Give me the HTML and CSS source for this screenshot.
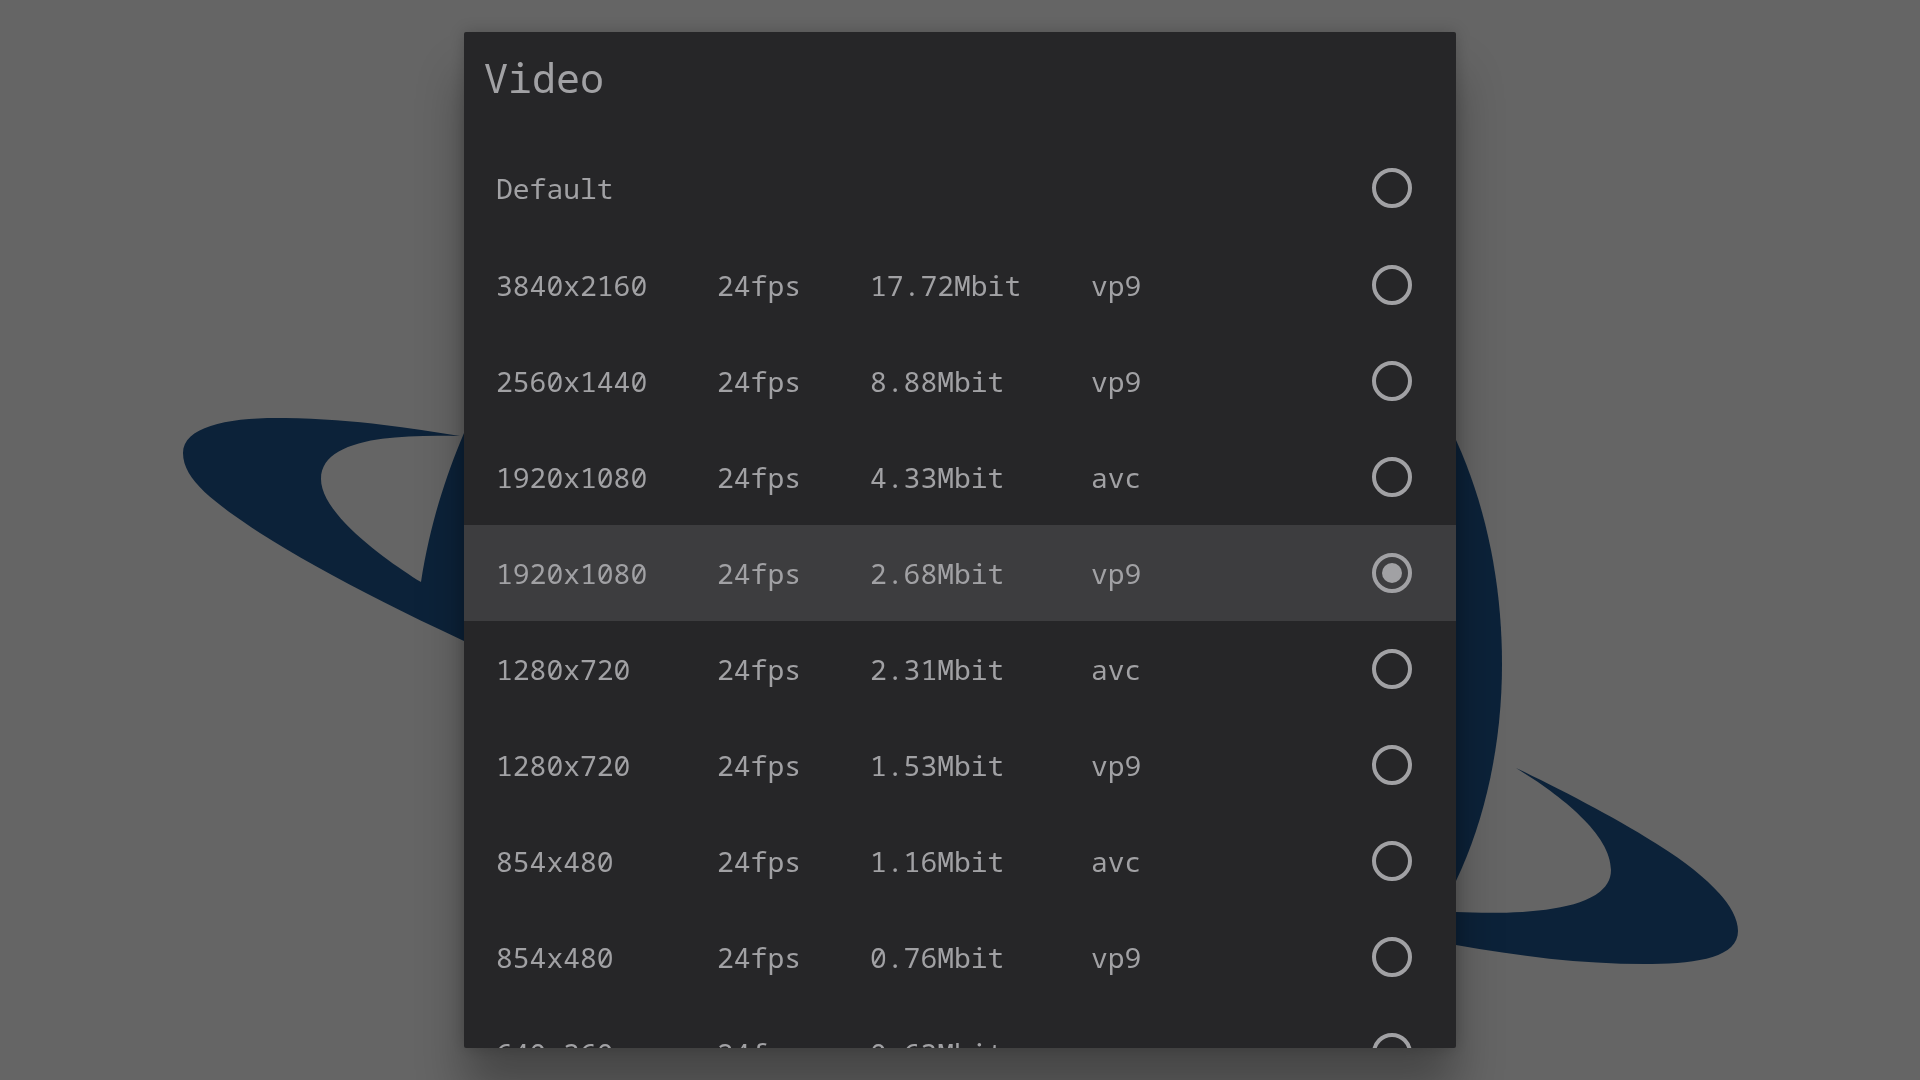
FILE: index.html
```html
<!DOCTYPE html>
<html lang="en">
<head>
    <meta charset="UTF-8">
    <meta name="viewport" content="width=device-width, initial-scale=1.0">
    <title>Video</title>
    <link rel="stylesheet" href="styles.css">
</head>
<body>
    <svg class="backdrop" viewBox="0 0 1920 1080" preserveAspectRatio="xMidYMid slice" aria-hidden="true">
        <!-- left ring and globe edge -->
        <path d="M460 436C405 427 350 419 285 418C230 417 183 426 183 453C183 480 215 503 260 533C310 565 380 602 464 641H720V433H464C445 478 430 525 421 582C390 563 321 515 321 479C321 440 390 434 460 436Z"/>
        <!-- globe -->
        <path d="M1456 440C1487 508 1502 586 1502 664C1502 742 1486 818 1456 881H1200V440Z"/>
        <!-- right ring -->
        <path d="M1516 768C1560 789 1620 820 1660 846C1703 873 1738 905 1738 931C1738 958 1695 964 1645 964C1580 964 1518 956 1456 945H1300V912H1456C1520 915 1611 912 1611 870C1611 835 1562 796 1516 768Z"/>
    </svg>

    <main class="page">
        <form class="dialog">
            <h1 class="dialog-title">Video</h1>

            <div class="options">
                <label class="option option-default">
                    <span class="name">Default</span>
                    <input type="radio" name="format" class="radio">
                </label>
                <label class="option">
                    <span>3840x2160</span>
                    <span>24fps</span>
                    <span>17.72Mbit</span>
                    <span>vp9</span>
                    <input type="radio" name="format" class="radio">
                </label>
                <label class="option">
                    <span>2560x1440</span>
                    <span>24fps</span>
                    <span>8.88Mbit</span>
                    <span>vp9</span>
                    <input type="radio" name="format" class="radio">
                </label>
                <label class="option">
                    <span>1920x1080</span>
                    <span>24fps</span>
                    <span>4.33Mbit</span>
                    <span>avc</span>
                    <input type="radio" name="format" class="radio">
                </label>
                <label class="option">
                    <span>1920x1080</span>
                    <span>24fps</span>
                    <span>2.68Mbit</span>
                    <span>vp9</span>
                    <input type="radio" name="format" class="radio" checked>
                </label>
                <label class="option">
                    <span>1280x720</span>
                    <span>24fps</span>
                    <span>2.31Mbit</span>
                    <span>avc</span>
                    <input type="radio" name="format" class="radio">
                </label>
                <label class="option">
                    <span>1280x720</span>
                    <span>24fps</span>
                    <span>1.53Mbit</span>
                    <span>vp9</span>
                    <input type="radio" name="format" class="radio">
                </label>
                <label class="option">
                    <span>854x480</span>
                    <span>24fps</span>
                    <span>1.16Mbit</span>
                    <span>avc</span>
                    <input type="radio" name="format" class="radio">
                </label>
                <label class="option">
                    <span>854x480</span>
                    <span>24fps</span>
                    <span>0.76Mbit</span>
                    <span>vp9</span>
                    <input type="radio" name="format" class="radio">
                </label>
                <label class="option">
                    <span>640x360</span>
                    <span>24fps</span>
                    <span>0.63Mbit</span>
                    <span>avc</span>
                    <input type="radio" name="format" class="radio">
                </label>
            </div>
        </form>
    </main>
</body>
</html>
```
FILE: styles.css
```css
* {
    box-sizing: border-box;
}
body {
    margin: 0;
    background-color: #656565;
    color: #a1a1a4;
    font-family: "Droid Sans Mono", "Noto Sans Mono", "DejaVu Sans Mono", monospace;
    font-size: 28px;
    overflow: hidden;
}
.backdrop {
    position: fixed;
    inset: 0;
    width: 100%;
    height: 100%;
    fill: #0c2239;
}
.page {
    position: relative;
    display: flex;
    justify-content: center;
    height: 100vh;
    padding: 32px;
}
.dialog {
    display: flex;
    flex-direction: column;
    width: 100%;
    max-width: 992px;
    background-color: #262628;
    border-radius: 2px;
    box-shadow: 0 44px 48px rgba(0, 0, 0, 0.3), 0 0 16px rgba(0, 0, 0, 0.2);
    overflow: hidden;
}
.dialog-title {
    margin: 0;
    padding: 22px 20px 38px;
    font-size: 40px;
    font-weight: 400;
    line-height: 48px;
}
.options {
    flex: 1;
    min-height: 0;
    overflow-y: auto;
    scrollbar-width: none;
}
.option {
    display: grid;
    grid-template-columns: 221px 153px 221px 1fr auto;
    align-items: center;
    height: 96px;
    padding: 0 44px 0 32px;
    cursor: pointer;
}
.option-default {
    margin-bottom: 1px;
}
.option:has(.radio:checked) {
    background-color: #3d3d3f;
}
.name {
    grid-column: 1 / 5;
}
.radio {
    appearance: none;
    display: grid;
    place-content: center;
    width: 40px;
    height: 40px;
    margin: 0;
    border: 4px solid #a1a1a4;
    border-radius: 50%;
    cursor: pointer;
}
.radio:checked::before {
    content: "";
    width: 20px;
    height: 20px;
    border-radius: 50%;
    background-color: #a1a1a4;
}
```
